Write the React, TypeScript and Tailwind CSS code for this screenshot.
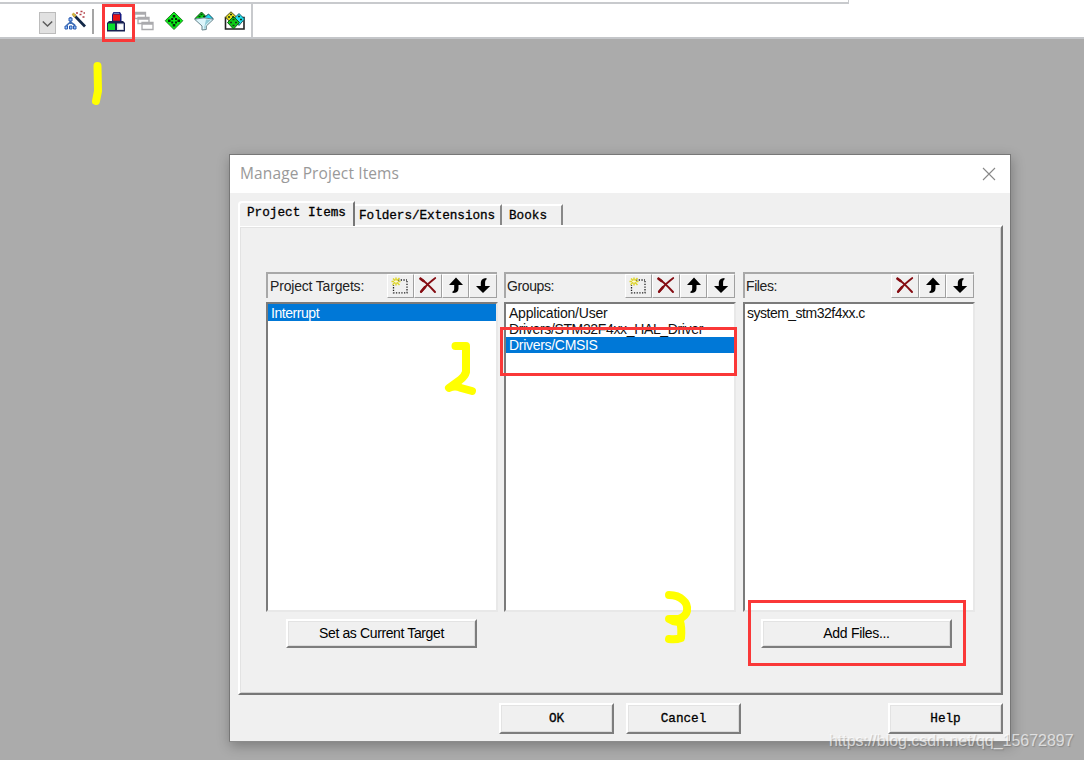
import React from 'react';

type IconName = 'new' | 'delete' | 'up' | 'down';

interface ColumnProps {
  title: string;
  icons: IconName[];
  items: { text: string; className?: string }[];
  selected?: number;
  action?: string;
  actionClass?: string;
  className?: string;
  titleClass?: string;
}

const sans = "font-['Liberation_Sans',sans-serif] text-[14px] tracking-[-0.3px]";
const mono = "font-['Liberation_Mono',monospace] text-[12.7px] [-webkit-text-stroke:0.3px_#000]";

const ListIcon: React.FC<{ name: IconName }> = ({ name }) => {
  if (name === 'new') {
    return (
      <svg width="20" height="20" viewBox="0 0 20 20" fill="none">
        <path d="M8 4H17" stroke="#222" strokeWidth="1.3" strokeDasharray="1.3 1.4" />
        <path d="M17 5V16.8H3.5V9" stroke="#222" strokeWidth="1.3" strokeDasharray="1.3 1.4" />
        <path d="M6 1.5V4M6 7V9.500M1.5 5.500H4M8 5.500H10.500M3 2.500L9.500 9M9.500 2L2.500 8.800" stroke="#ded52c" strokeWidth="1.5" />
        <path d="M5 4.500H7V6.500H5Z" fill="#fffbd0" />
      </svg>
    );
  }
  if (name === 'delete') {
    return (
      <svg width="20" height="20" viewBox="0 0 20 20" fill="none" stroke="#850c12" strokeLinecap="round">
        <path d="M2.5 2.500C7 5.500 12 10.500 17 16" strokeWidth="2" />
        <path d="M17.300 2C11 6.500 7 10.500 3 16" strokeWidth="1.7" />
        <path d="M3.2 15.500L7 11.200M2.5 2.700L5.500 5" strokeWidth="2.6" />
      </svg>
    );
  }
  if (name === 'up') {
    return (
      <svg width="20" height="20" viewBox="0 0 20 20" fill="#000">
        <path d="M10 1.500L17 9H12.500V12.500C12.500 15.500 10.500 17 6.500 17V15.500C8 15 8.200 14 8.200 12V9H3Z" />
      </svg>
    );
  }
  return (
    <svg width="20" height="20" viewBox="0 0 20 20" fill="#000">
      <path d="M10 17L3 10H7.800V7.500C7.800 4 9.500 2.300 13.500 2V3.500C12.300 4 12.100 5.500 12.100 7.500V10H17.200Z" />
    </svg>
  );
};

const DialogButton: React.FC<{ label: string; className: string }> = ({ label, className }) => (
  <button
    className={`flex items-center justify-center border-2 border-t-white border-l-white border-r-[#7d7d7d] border-b-[#7d7d7d] bg-[#f0f0f0] text-black shadow-[inset_1px_1px_0_#e3e3e3,inset_-1px_-1px_0_#dcdcdc] ${className}`}
  >
    {label}
  </button>
);

const Column: React.FC<ColumnProps> = ({
  title,
  icons,
  items,
  selected,
  action,
  actionClass = '',
  className = '',
  titleClass = 'pl-[2px]',
}) => (
  <div className={`flex w-[231px] flex-col ${sans} ${className}`}>
    <div className="flex h-[26px] items-stretch border-t-2 border-l-2 border-[#a8a8a8] bg-[#f0f0f0]">
      <span className={`flex-1 pt-px leading-[23px] text-[#222] ${titleClass}`}>{title}</span>
      {icons.map((icon) => (
        <span
          key={icon}
          className="flex w-[27.6px] items-center justify-center border-t border-r border-b border-l border-t-white border-r-[#a0a0a0] border-b-[#a0a0a0] border-l-white"
        >
          <ListIcon name={icon} />
        </span>
      ))}
    </div>
    <div className="-mr-px mt-1 h-[310px] border-t-2 border-r-2 border-b-2 border-l-2 border-t-[#7b7b7b] border-r-[#e8e8e8] border-b-[#e8e8e8] border-l-[#7b7b7b] bg-white pt-px">
      {items.map((item, i) => (
        <div
          key={item.text}
          className={`h-4 pl-[3px] leading-[17px] whitespace-nowrap ${
            i === selected ? 'bg-[#0078d7] text-white' : 'text-[#111]'
          } ${item.className ?? ''}`}
        >
          {item.text}
        </div>
      ))}
    </div>
    {action && <DialogButton label={action} className={`mt-[7px] h-[29px] w-[191px] ${actionClass}`} />}
  </div>
);

const Toolbar = () => (
  <header className="flex h-[39px] flex-col border-b-2 border-[#c4c6c9] bg-white">
    <div className="h-1 w-[849px] shrink-0 border-r border-b-2 border-[#c8cacd]" />
    <div className="flex h-[34px] w-[253px] items-start border-r-2 border-[#c8cacd] pt-[5px] pl-[39px]">
      <div className="mt-[3px] flex h-[22px] w-[17px] items-center justify-center border border-[#bcbcbc] bg-[#e1e1e1]">
        <svg width="13" height="10" viewBox="0 0 13 10" fill="none" stroke="#5c5c5c" strokeWidth="1.5">
          <path d="M1.8 3.5L6.5 8L11.2 3.5" />
        </svg>
      </div>
      {/* wizard wand */}
      <svg className="ml-[8px]" width="23" height="24" viewBox="0 0 23 24" fill="none">
        <path d="M6.500 8V15M3 19V16L6.500 13L10.500 16V19" stroke="#3c6cb5" strokeWidth="1.6" />
        <path d="M5 9H8V12H5ZM1 17H3.500V20H1ZM5.500 17H8V20H5.500ZM9.500 17H12V20H9.500Z" fill="#8ec3ff" stroke="#2d5bb0" />
        <path d="M9.5 5.5L21 17.500" stroke="#122747" strokeWidth="2.7" />
        <path d="M8.500 4.500L11.500 7.500" stroke="#d0b340" strokeWidth="2.5" />
        <path d="M12 4H14M16.500 2.500H18.500M19.500 4H21M15.500 5.500H17.500M18.500 8H20.500" stroke="#b33e46" strokeWidth="1.7" />
      </svg>
      <div className="ml-[5px] h-[25px] w-[2px] bg-[#a5a5a5]" />
      {/* project items blocks */}
      <svg className="ml-[12px]" width="20" height="24" viewBox="0 0 20 24">
        <path d="M7.500 3H14L15.500 5.500V13H6V5.500Z" fill="#171b80" />
        <path d="M1 14L3 12H17L19 14V22.500H1Z" fill="#172052" />
        <path d="M7 5.500H14V11.700H7Z" fill="#e71316" />
        <path d="M2 14.500H9V21H2Z" fill="#09dd2d" />
        <path d="M11 14.500H17.700V21H11Z" fill="#d9dfe8" />
        <path d="M12.500 15.500H17V20H12.500Z" fill="#fff" />
        <path d="M7.800 4.300H13.300" stroke="#7da0c8" />
      </svg>
      <svg className="ml-[8px]" width="22" height="24" viewBox="0 0 22 24" fill="#fff" stroke="#aaaaad" strokeWidth="1.3">
        <path d="M.7 3.500H11.500V9.500H.7ZM.7 5H11.500" />
        <path d="M4 8.500H15V14.500H4ZM4 10H15" />
        <path d="M8 13.500H19V20.500H8ZM8 15H19" />
      </svg>
      <svg className="ml-[8px]" width="20" height="24" viewBox="0 0 20 24">
        <path d="M10 3L18.800 11.700L10 20.500L1.200 11.700Z" fill="#0bed18" stroke="#217f25" />
        <path d="M8.700 6H11.300V8.500H8.700ZM8.700 15H11.300V17.500H8.700ZM4 10.500H6.600V13H4ZM13.400 10.500H16V13H13.400ZM7.200 9H9.200V11H7.200ZM11 9H13V11H11ZM7.200 12.500H9.200V14.500H7.200ZM11 12.500H13V14.500H11Z" fill="#052c08" />
      </svg>
      {/* pack filter */}
      <svg className="ml-[9px]" width="22" height="24" viewBox="0 0 22 24">
        <path d="M2 9.500L8.500 3L14 8.500L10 13Z" fill="#08d919" stroke="#164d18" />
        <path d="M11.500 8.500L15.500 5L20 9.500L15 13Z" fill="#20d6ee" stroke="#174b58" />
        <path d="M1.500 10.200Q11 7.500 20.500 10.200L13.300 17V20.500L9 21V17Z" fill="#dcf5fb" stroke="#68858d" />
        <path d="M13 10.500L18 10.800L12.500 16V19.500H11Z" fill="#91ccd8" />
        <path d="M7.500 5.500H9.500M5.500 7.500H7.500M10 7.500H12" stroke="#043e0b" strokeWidth="1.7" />
      </svg>
      {/* pack installer */}
      <svg className="ml-[9px]" width="22" height="24" viewBox="0 0 22 24" strokeWidth="1">
        <path d="M1.5 8.500H20V20H1.5Z" fill="#fff" stroke="#222" strokeWidth="1.6" />
        <path d="M1.500 8L7 2.800L12.500 8L7 14Z" fill="#e8df22" stroke="#51501a" />
        <path d="M9.500 10L15 4.500L20.500 10L15 16.500Z" fill="#1ee0f2" stroke="#276069" />
        <path d="M3.500 13.500L9.500 7.500L15.500 13.500L9.500 20Z" fill="#0ecd17" stroke="#125617" />
        <path d="M8.500 10.500H10.500M6 13.500H8M11 13.500H13M8.500 16.500H10.500M6 5.500H8M4 8H6M8 8H10M14 7.500H16M16 10.500H18" stroke="#173918" strokeWidth="1.6" />
      </svg>
    </div>
  </header>
);

const ManageDialog = () => (
  <section className="absolute top-[154px] left-[229px] flex h-[588px] w-[782px] flex-col border border-[#777] border-b-[#8b8b8b] bg-[#f0f0f0] shadow-[1px_4px_12px_rgba(0,0,0,0.28)]">
    <div className="flex h-[38px] shrink-0 items-center justify-between bg-white pr-[14px] pl-[10px]">
      <h1 className="font-['Open_Sans',sans-serif] text-[15.5px] tracking-[0.12px] text-[#999]">Manage Project Items</h1>
      <svg width="14" height="14" viewBox="0 0 14 14" stroke="#888" strokeWidth="1.1">
        <path d="M1 1L13 13M13 1L1 13" />
      </svg>
    </div>

    <div className="flex flex-1 flex-col pt-2 pr-[7px] pl-2">
      <div className={`flex h-6 items-end text-black ${mono}`}>
        <div className="z-10 h-[25px] w-[117px] self-start rounded-tl-sm border-t-2 border-r-2 border-l-2 border-t-white border-r-[#777] border-l-white bg-[#f0f0f0] pl-[7px] leading-[19px] whitespace-nowrap">
          Project Items
        </div>
        <div className="h-[21px] w-[147px] border-t-2 border-r-2 border-t-white border-r-[#888] pl-1 leading-[19px] tracking-[-0.05px] whitespace-nowrap">
          Folders/Extensions
        </div>
        <div className="h-[21px] w-[61px] border-t-2 border-r-2 border-t-white border-r-[#888] pl-[7px] leading-[19px]">
          Books
        </div>
      </div>

      <main className="flex h-[470px] shrink-0 gap-[7px] border-2 border-t-white border-r-[#777] border-b-[#777] border-l-white pt-[45px] pl-[26px] shadow-[inset_1px_1px_0_#e3e3e3,inset_-1px_-1px_0_#cfcfcf]">
        <Column
          title="Project Targets:"
          titleClass="pl-[2px] tracking-[-0.18px]"
          icons={['new', 'delete', 'up', 'down']}
          items={[{ text: 'Interrupt', className: 'tracking-[-0.45px] shadow-[0_-1px_0_#0078d7]' }]}
          selected={0}
          action="Set as Current Target"
          actionClass="ml-[20px] tracking-[-0.38px]"
        />
        <Column
          title="Groups:"
          titleClass="pl-px tracking-[-0.4px]"
          icons={['new', 'delete', 'up', 'down']}
          items={[
            { text: 'Application/User', className: 'tracking-[-0.22px]' },
            { text: 'Drivers/STM32F4xx_HAL_Driver', className: 'tracking-[-0.35px]' },
            { text: 'Drivers/CMSIS' },
          ]}
          selected={2}
        />
        <Column
          className="ml-px"
          title="Files:"
          titleClass="pl-px tracking-[-0.4px]"
          icons={['delete', 'up', 'down']}
          items={[{ text: 'system_stm32f4xx.c', className: '-ml-px tracking-[-0.5px]' }]}
          action="Add Files..."
          actionClass="ml-[18px]"
        />
      </main>

      <footer className={`mt-[8px] flex pl-[261px] ${mono}`}>
        <DialogButton label="OK" className="h-[31px] w-[115px]" />
        <DialogButton label="Cancel" className="ml-[12px] h-[31px] w-[115px]" />
        <DialogButton label="Help" className="ml-auto h-[31px] w-[115px]" />
      </footer>
    </div>
  </section>
);

const Annotations = () => (
  <>
    <div className="absolute top-[4px] left-[102px] h-[38px] w-[33px] border-3 border-[#fa3838]" />
    <div className="absolute top-[327px] left-[500px] h-[49px] w-[237px] border-3 border-[#fa3838]" />
    <div className="absolute top-[600px] left-[748px] h-[66px] w-[218px] border-3 border-[#fa3838]" />
    <svg
      className="absolute top-0 left-0"
      width="1084"
      height="760"
      fill="none"
      stroke="#ffff00"
      strokeWidth="8"
      strokeLinecap="round"
      strokeLinejoin="round"
    >
      <path d="M97.5 66L98 91L96 101" />
      <path d="M455.5 346H466V372Q465 376 460 380L449 388Q455 385 461 388L472 391" />
      <path d="M669 595Q678 595 683 600Q688 604 687 611Q686 616 679 619H669Q675 623 680 621Q682 628 681 638Q676 640 669 639" />
    </svg>
  </>
);

export default function App() {
  return (
    <div className="relative h-[760px] w-[1084px] overflow-hidden bg-[#ababab]">
      <Toolbar />
      <ManageDialog />
      <Annotations />
      <div className="absolute top-[731px] left-[829px] font-['Liberation_Sans',sans-serif] text-[16px] leading-5 tracking-[-0.03px] whitespace-nowrap text-white/65 [text-shadow:1px_1px_1px_rgba(80,80,80,0.35)]">
        https://blog.csdn.net/qq_15672897
      </div>
    </div>
  );
}
